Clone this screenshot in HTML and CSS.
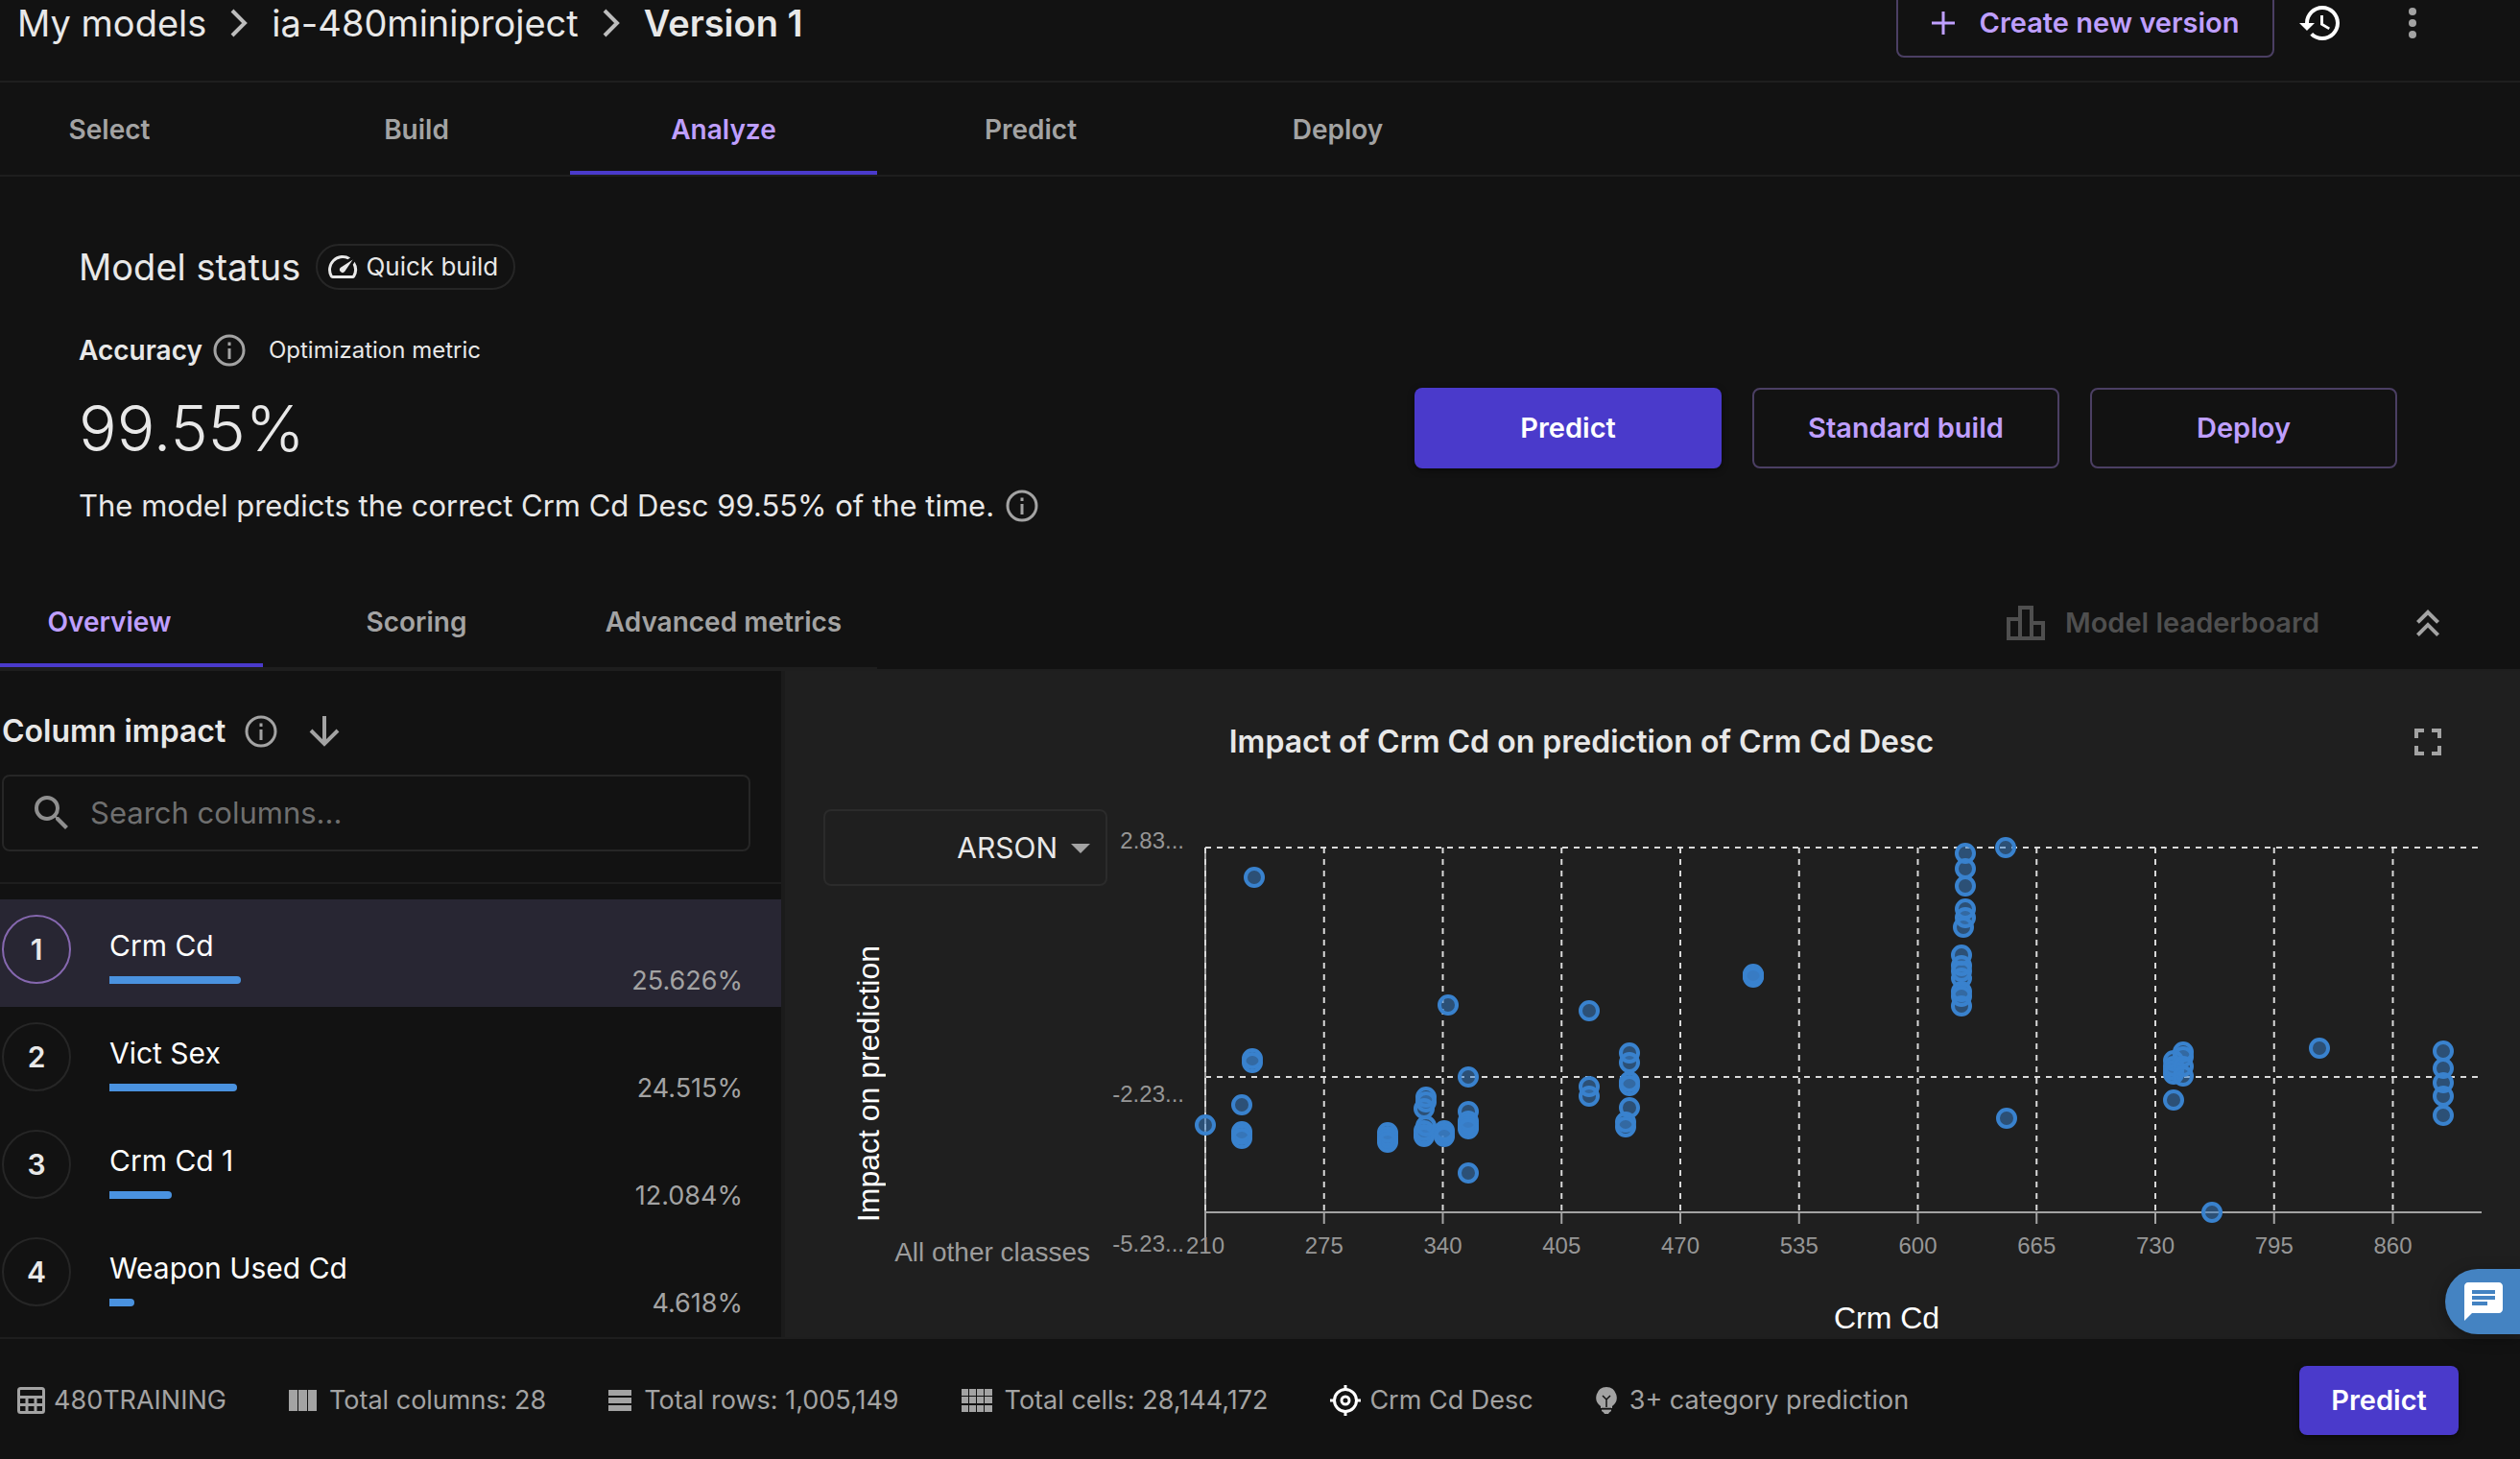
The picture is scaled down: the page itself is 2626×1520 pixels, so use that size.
FILE: index.html
```html
<!DOCTYPE html>
<html lang="en">
<head>
<meta charset="utf-8">
<meta name="viewport" content="width=device-width, initial-scale=1">
<title>ia-480miniproject – Analyze</title>
<link rel="stylesheet" href="styles.css">
</head>
<body>
<svg class="defs" aria-hidden="true">
  <symbol id="i-info" viewBox="0 0 34 34"><circle cx="17" cy="17" r="15" fill="none" stroke="currentColor" stroke-width="3"/><path d="M15.500 15h3v11h-3zM15.500 8.500h3v3.500h-3z" fill="currentColor"/></symbol>
  <symbol id="i-next" viewBox="0 0 18 30"><path d="M2 2l13 13L2 28" fill="none" stroke="currentColor" stroke-width="4"/></symbol>
</svg>

<header class="topbar">
  <nav class="crumbs" aria-label="Breadcrumb">
    <a href="#models">My models</a>
    <svg class="sep"><use href="#i-next"/></svg>
    <a href="#project">ia-480miniproject</a>
    <svg class="sep"><use href="#i-next"/></svg>
    <strong>Version 1</strong>
  </nav>
  <div class="topbar-actions">
    <button class="btn btn-outline btn-new" type="button">
      <svg width="24" height="24" viewBox="0 0 24 24"><path d="M12 0v24M0 12h24" stroke="currentColor" stroke-width="3"/></svg>
      Create new version
    </button>
    <button class="icon-btn history" type="button" aria-label="History">
      <svg class="i48" viewBox="0 0 24 24"><path d="M13 3c-4.970 0-9 4.030-9 9H1l3.890 3.890.07.14L9 12H6c0-3.870 3.130-7 7-7s7 3.130 7 7-3.130 7-7 7c-1.930 0-3.680-.79-4.940-2.060l-1.420 1.420C8.270 19.990 10.510 21 13 21c4.970 0 9-4.030 9-9s-4.030-9-9-9zm-1 5v5l4.280 2.540.72-1.210-3.500-2.080V8H12z"/></svg>
    </button>
    <button class="icon-btn" type="button" aria-label="More options">
      <svg class="i48" viewBox="0 0 24 24"><circle cx="12" cy="6" r="2"/><circle cx="12" cy="12" r="2"/><circle cx="12" cy="18" r="2"/></svg>
    </button>
  </div>
</header>

<nav class="tabs" aria-label="Stages">
  <a class="tab" href="#select">Select</a>
  <a class="tab" href="#build">Build</a>
  <a class="tab active" href="#analyze">Analyze</a>
  <a class="tab" href="#predict">Predict</a>
  <a class="tab" href="#deploy">Deploy</a>
</nav>

<main>
  <section class="status">
    <div class="status-head">
      <h1>Model status</h1>
      <span class="chip">
        <svg viewBox="0 0 24 24"><path d="M20.380 8.570l-1.230 1.850a8 8 0 0 1-.22 7.580H5.070A8 8 0 0 1 15.580 6.850l1.850-1.230A10 10 0 0 0 3.350 19a2 2 0 0 0 1.720 1h13.850a2 2 0 0 0 1.740-1 10 10 0 0 0-.27-10.440zm-9.790 6.840a2 2 0 0 0 2.830 0l5.660-8.490-8.490 5.660a2 2 0 0 0 0 2.830z"/></svg>
        Quick build
      </span>
    </div>
    <div class="status-body">
      <div class="score">
        <div class="metric"><strong>Accuracy</strong><svg class="info"><use href="#i-info"/></svg><span>Optimization metric</span></div>
        <div class="value">99.55%</div>
        <p class="desc">The model predicts the correct Crm Cd Desc 99.55% of the time.<svg class="info"><use href="#i-info"/></svg></p>
      </div>
      <div class="status-actions">
        <button class="btn btn-primary" type="button">Predict</button>
        <button class="btn btn-outline" type="button">Standard build</button>
        <button class="btn btn-outline" type="button">Deploy</button>
      </div>
    </div>
  </section>

  <div class="viewbar">
    <nav class="tabs" aria-label="Views">
      <a class="tab active" href="#overview">Overview</a>
      <a class="tab" href="#scoring">Scoring</a>
      <a class="tab" href="#advanced">Advanced metrics</a>
    </nav>
    <div class="view-actions">
      <button class="leader" type="button" disabled>
        <svg class="i48" viewBox="0 0 24 24"><path fill-rule="evenodd" d="M16 11V3H8v6H2v12h20V11h-6zm-6-6h4v14h-4V5zm-6 6h4v8H4v-8zm16 8h-4v-6h4v6z"/></svg>
        Model leaderboard
      </button>
      <button class="icon-btn" type="button" aria-label="Collapse">
        <svg class="i48" viewBox="0 0 24 24"><path d="M6 17.590L7.410 19 12 14.420 16.590 19 18 17.590l-6-6zM6 11l1.410 1.410L12 7.830l4.590 4.580L18 11l-6-6z"/></svg>
      </button>
    </div>
  </div>

  <div class="panels">
    <section class="columns">
      <div class="columns-head">
        <h2>Column impact</h2>
        <svg class="info"><use href="#i-info"/></svg>
        <button class="icon-btn sort" type="button" aria-label="Sort descending">
          <svg width="32" height="32" viewBox="0 0 32 32"><path d="M16 0v29M2 15l14 14 14-14" fill="none" stroke="currentColor" stroke-width="4"/></svg>
        </button>
      </div>
      <label class="search">
        <svg class="i48" viewBox="0 0 24 24"><path d="M15.500 14h-.79l-.28-.27A6.471 6.471 0 0 0 16 9.500 6.500 6.500 0 1 0 9.500 16c1.610 0 3.090-.59 4.230-1.570l.27.28v.79l5 4.990L20.490 19l-4.990-5zm-6 0C7.010 14 5 11.990 5 9.500S7.010 5 9.500 5 14 7.010 14 9.500 11.990 14 9.500 14z"/></svg>
        <input type="search" placeholder="Search columns..." aria-label="Search columns">
      </label>
      <ol class="list">
        <li class="row selected"><span class="rank">1</span><div class="name">Crm Cd<span class="bar" style="width:137px"></span></div><span class="pct">25.626%</span></li>
        <li class="row"><span class="rank">2</span><div class="name">Vict Sex<span class="bar" style="width:133px"></span></div><span class="pct">24.515%</span></li>
        <li class="row"><span class="rank">3</span><div class="name">Crm Cd 1<span class="bar" style="width:65px"></span></div><span class="pct">12.084%</span></li>
        <li class="row"><span class="rank">4</span><div class="name">Weapon Used Cd<span class="bar" style="width:26px"></span></div><span class="pct">4.618%</span></li>
      </ol>
    </section>

    <section class="chart">
      <div class="chart-head">
        <h2>Impact of Crm Cd on prediction of Crm Cd Desc</h2>
        <button class="icon-btn" type="button" aria-label="Full screen">
          <svg class="i48" viewBox="0 0 24 24"><path d="M7 14H5v5h5v-2H7v-3zm-2-4h2V7h3V5H5v5zm12 7h-3v2h5v-5h-2v3zM14 5v2h3v3h2V5h-5z"/></svg>
        </button>
      </div>
      <div class="chart-body">
        <div class="axis-col">
          <div class="class-select">
            <select aria-label="Class"><option>ARSON</option></select>
            <svg class="i48" viewBox="0 0 24 24"><path d="M7 10l5 5 5-5z"/></svg>
          </div>
          <div class="y-title">Impact on prediction</div>
          <div class="others">All other classes</div>
        </div>
        <svg class="plot" id="plot" viewBox="1154 842 1472 550" role="img" aria-label="Scatter plot of impact by Crm Cd"></svg>
      </div>
    </section>
  </div>
</main>

<footer class="footer">
  <ul class="facts">
    <li class="dataset"><svg width="29" height="28" viewBox="0 0 29 28"><rect x="1.500" y="1.500" width="26" height="25" rx="2" fill="none" stroke="currentColor" stroke-width="3"/><path d="M2 10.500h25M2 18.500h25M10 11v15M19 11v15" fill="none" stroke="currentColor" stroke-width="3"/></svg>480TRAINING</li>
    <li><svg width="29" height="22" viewBox="0 0 29 22"><path d="M0 0h9v22H0zM10 0h9v22h-9zM20 0h9v22h-9z"/></svg>Total columns: 28</li>
    <li><svg width="24" height="22" viewBox="0 0 24 22"><path d="M0 0h24v6H0zM0 8h24v6H0zM0 16h24v6H0z"/></svg>Total rows: 1,005,149</li>
    <li><svg width="32" height="24" viewBox="0 0 32 24"><path d="M0 0h7v7H0zM8 0h7v7H8zM16 0h7v7h-7zM24 0h8v7h-8zM0 8h7v7H0zM8 8h7v7H8zM16 8h7v7h-7zM24 8h8v7h-8zM0 17h7v7H0zM8 17h7v7H8zM16 17h7v7h-7zM24 17h8v7h-8z"/></svg>Total cells: 28,144,172</li>
    <li class="target"><svg width="32" height="32" viewBox="0 0 32 32"><g fill="none" stroke="#fff" stroke-width="3"><circle cx="16" cy="16" r="11.500"/><circle cx="16" cy="16" r="4"/><path d="M16 0v5M16 27v5M0 16h5M27 16h5"/></g></svg>Crm Cd Desc</li>
    <li><svg width="22" height="28" viewBox="0 0 22 28"><path d="M11 0a11 11 0 0 0-6 20v2h12v-2A11 11 0 0 0 11 0zM6 23.500h10V25l-2 1.500L13 28H9l-1-1.500L6 25z"/><path d="M7 9l4 4 4-4M11 13v8M6 22.500h10" fill="none" stroke="#121212" stroke-width="1.500"/></svg>3+ category prediction</li>
  </ul>
  <button class="btn btn-primary btn-small" type="button">Predict</button>
</footer>

<button class="chat" type="button" aria-label="Chat">
  <svg class="i48" viewBox="0 0 24 24"><path d="M20 2H4c-1.100 0-1.990.9-1.990 2L2 22l4-4h14c1.100 0 2-.9 2-2V4c0-1.100-.9-2-2-2zM6 9h12v2H6V9zm8 5H6v-2h8v2zm4-6H6V6h12v2z"/></svg>
</button>
<script src="plot.js"></script>
</body>
</html>
```
FILE: styles.css
```css
:root {
  --bg: #121212;
  --panel: #1f1f1f;
  --line: #1e1e1e;
  --edge: #262626;
  --text: #e8e8e8;
  --muted: #a3a3a3;
  --accent: #bf9fff;
  --primary: #4a3acb;
  --outline: #4b3f63;
  --blue: #4a92df;
}
* { box-sizing: border-box; margin: 0; padding: 0; }
body {
  min-height: 100vh;
  display: flex;
  flex-direction: column;
  overflow: hidden;
  background: var(--bg);
  color: var(--text);
  font: 400 28px/36px Inter, "Liberation Sans", sans-serif;
}
a { color: inherit; text-decoration: none; }
button, input, select { font: inherit; color: inherit; background: none; border: 0; }
svg { flex: none; display: block; fill: currentColor; }
.defs { position: absolute; width: 0; height: 0; }
.i48 { width: 48px; height: 48px; }
.info { width: 34px; height: 34px; color: var(--muted); }
.icon-btn { display: flex; color: var(--muted); }

.btn {
  display: flex;
  align-items: center;
  justify-content: center;
  width: 320px;
  height: 84px;
  border-radius: 8px;
  font-size: 29px;
  font-weight: 600;
}
.btn-primary { background: var(--primary); color: #fff; box-shadow: 0 2px 6px rgba(0, 0, 0, .5); }
.btn-outline { border: 2px solid var(--outline); color: var(--accent); }
.btn-small { width: 166px; height: 72px; }

.topbar {
  display: flex;
  align-items: center;
  justify-content: space-between;
  height: 122px;
  margin-top: -36px;
  padding: 0 88px 0 18px;
  border-bottom: 2px solid var(--line);
}
.crumbs { display: flex; align-items: center; gap: 25px; font-size: 38px; line-height: 48px; }
.crumbs strong { font-weight: 600; }
.sep { width: 18px; height: 30px; color: #bdbdbd; }
.topbar-actions { display: flex; align-items: center; gap: 24px; }
.btn-new { width: 394px; height: 72px; gap: 26px; }
.history { color: #fff; margin-right: 24px; }

.tabs { display: flex; margin-left: -46px; border-bottom: 2px solid var(--line); }
.tab {
  width: 320px;
  padding: 31px 0 25px;
  border-bottom: 4px solid transparent;
  text-align: center;
  font-weight: 600;
  color: var(--muted);
}
.tab.active { color: var(--accent); border-color: var(--primary); }

.status { padding: 70px 128px 54px 82px; }
.status-head { display: flex; align-items: center; gap: 16px; }
h1 { font-size: 38px; font-weight: 400; line-height: 48px; }
.chip {
  display: flex;
  align-items: center;
  gap: 6px;
  height: 48px;
  padding: 0 16px 0 8px;
  border: 2px solid var(--edge);
  border-radius: 24px;
  font-size: 26px;
}
.chip svg { width: 36px; height: 36px; }
.status-body { display: flex; align-items: center; justify-content: space-between; margin-top: 45px; }
.metric { display: flex; align-items: center; }
.metric strong { font-weight: 600; margin-right: 11px; }
.metric span { font-size: 24px; margin-left: 24px; }
.value { font-size: 66px; font-weight: 300; line-height: 72px; margin: 27px 0; }
.desc { display: flex; align-items: center; gap: 12px; font-size: 31px; }
.status-actions { display: flex; gap: 32px; }

.viewbar { display: flex; justify-content: space-between; }
.view-actions { display: flex; align-items: center; gap: 89px; padding: 2px 72px 0 0; }
.leader { display: flex; align-items: center; gap: 17px; font-size: 29px; font-weight: 600; color: #4f4f4f; }

.panels { display: grid; grid-template-columns: 814px 1fr; border-top: 2px solid var(--line); }
h2 { font-size: 32px; font-weight: 600; line-height: 40px; }
.columns-head { display: flex; align-items: center; height: 108px; padding: 18px 0 0 2px; }
.columns-head .info { margin-left: 20px; }
.sort { margin-left: 33px; }
.search {
  display: flex;
  align-items: center;
  gap: 16px;
  height: 80px;
  margin: 0 32px 32px 2px;
  padding-left: 26px;
  border: 2px solid var(--edge);
  border-radius: 8px;
  color: #8f8f8f;
}
.search input { flex: 1; min-width: 0; font-size: 31px; outline: 0; }
.search input::placeholder { color: #6f6f6f; }
.list { list-style: none; border-top: 2px solid var(--line); padding: 16px 0 7px; }
.row { display: flex; height: 112px; padding: 16px 40px 8px 2px; }
.row.selected { background: #282633; }
.rank {
  display: flex;
  align-items: center;
  justify-content: center;
  width: 72px;
  height: 72px;
  border: 2px solid var(--edge);
  border-radius: 50%;
  font-size: 30px;
  font-weight: 600;
}
.selected .rank { border-color: #8668b0; }
.name { flex: 1; margin: 14px 0 0 40px; font-size: 30px; color: #fff; }
.bar { display: block; height: 8px; margin-top: 14px; background: var(--blue); border-radius: 0 4px 4px 0; }
.pct { align-self: flex-end; font-size: 27px; line-height: 38px; color: var(--muted); }

.chart { background: var(--panel); border-left: 4px solid #1b1b1b; min-width: 0; }
.chart-head { display: grid; grid-template-columns: 1fr auto 1fr; align-items: center; height: 144px; padding: 4px 72px 0 0; }
.chart-head h2 { grid-column: 2; padding-right: 76px; }
.chart-head .icon-btn { justify-self: end; }
.chart-body { display: flex; align-items: flex-start; padding-left: 40px; }
.axis-col { flex: none; width: 296px; display: flex; flex-direction: column; }
.class-select {
  display: grid;
  grid-template-columns: 1fr auto;
  align-items: center;
  height: 80px;
  padding-right: 2px;
  border: 2px solid #2b2b2b;
  border-radius: 8px;
}
.class-select select { appearance: none; height: 100%; font-size: 30px; text-align: right; text-align-last: right; outline: 0; }
.class-select svg { color: var(--muted); }
.y-title {
  writing-mode: vertical-rl;
  transform: rotate(180deg);
  margin: 62px 0 14px 29px;
  align-self: flex-start;
  font: 32px/36px "Liberation Sans", Arial, sans-serif;
  color: #fff;
}
.others { margin-right: 18px; text-align: right; font: 28px/36px "Liberation Sans", Arial, sans-serif; color: #9c9c9c; }
.plot { flex: 1; min-width: 0; height: auto; font-family: "Liberation Sans", Arial, sans-serif; }
.plot .tick { font-size: 24px; fill: #969696; }
.plot .x-title { font-size: 32px; fill: #fff; text-anchor: middle; }
.plot .grid { stroke: #d9d9d9; stroke-width: 2; stroke-dasharray: 6 6; }
.plot .axis { stroke: #a3a3a3; stroke-width: 2; }
.plot circle { fill: rgba(57, 130, 206, .5); stroke: #3982ce; stroke-width: 4; }

.footer {
  display: flex;
  align-items: center;
  justify-content: space-between;
  height: 128px;
  padding: 2px 64px 0 18px;
  border-top: 2px solid var(--line);
}
.facts { display: flex; align-items: center; gap: 65px; list-style: none; font-size: 27px; color: var(--muted); }
.facts li { display: flex; align-items: center; gap: 13px; white-space: nowrap; }
.facts .dataset, .facts .target { gap: 9px; }

.chat {
  position: fixed;
  right: 0;
  bottom: 130px;
  display: flex;
  align-items: center;
  width: 78px;
  height: 68px;
  padding-left: 16px;
  border-radius: 34px 0 0 34px;
  background: #4483c2;
  color: #fff;
  box-shadow: 0 4px 16px rgba(0, 0, 0, .35);
}
```
FILE: plot.js
```js
// Draws the scatter plot: grid, axes, tick labels, then one circle per sample.
const plot = document.getElementById('plot');
const X0 = 1256, STEP = 123.75, TOP = 882, MID = 1121, BASE = 1262;
const add = (tag, attrs, text) => {
  const el = document.createElementNS('http://www.w3.org/2000/svg', tag);
  for (const key in attrs) el.setAttribute(key, attrs[key]);
  if (text) el.textContent = text;
  plot.appendChild(el);
};
const line = (cls, x1, y1, x2, y2) => add('line', { class: cls, x1, y1, x2, y2 });

line('grid', X0, TOP, 2582, TOP);
line('grid', X0, MID, 2582, MID);
line('axis', X0, TOP, X0, 1302);
line('axis', X0, BASE, 2586, BASE);
for (let i = 0; i < 11; i++) {
  const x = X0 + i * STEP;
  line('grid', x, TOP, x, BASE);
  if (i) line('axis', x, BASE, x, 1274);
  add('text', { class: 'tick', x, y: 1305, 'text-anchor': 'middle' }, String(210 + i * 65));
}
[['2.83...', 883], ['-2.23...', 1147], ['-5.23...', 1303]].forEach(([t, y]) =>
  add('text', { class: 'tick', x: 1234, y, 'text-anchor': 'end' }, t));
add('text', { class: 'x-title', x: 1966, y: 1383 }, 'Crm Cd');

const samples = [
  [1256, [1171]], [1294, [1150, 1178, 1181, 1185]], [1305, [1102, 1106]], [1307, [913]],
  [1446, [1179, 1183, 1186, 1189]], [1484, [1154, 1177, 1181, 1183]], [1486, [1142, 1147, 1172]],
  [1505, [1177, 1180, 1183]], [1509, [1046]], [1530, [1121, 1157, 1167, 1170, 1173, 1175, 1221]],
  [1656, [1052, 1131, 1141]], [1694, [1168, 1173]], [1698, [1096, 1106, 1126, 1130, 1153]],
  [1827, [1014, 1015, 1016, 1017]],
  [2044, [994, 1005, 1011, 1018, 1032, 1037, 1047]], [2046, [965]], [2048, [888, 904, 922, 946, 955]],
  [2090, [882]], [2091, [1164]], [2265, [1104, 1110, 1114, 1118, 1145]],
  [2275, [1095, 1100, 1110, 1120]], [2305, [1262]], [2417, [1091]],
  [2546, [1094, 1112, 1127, 1141, 1161]]
];
samples.forEach(([cx, ys]) => ys.forEach(cy => add('circle', { cx, cy, r: 9 })));
```
